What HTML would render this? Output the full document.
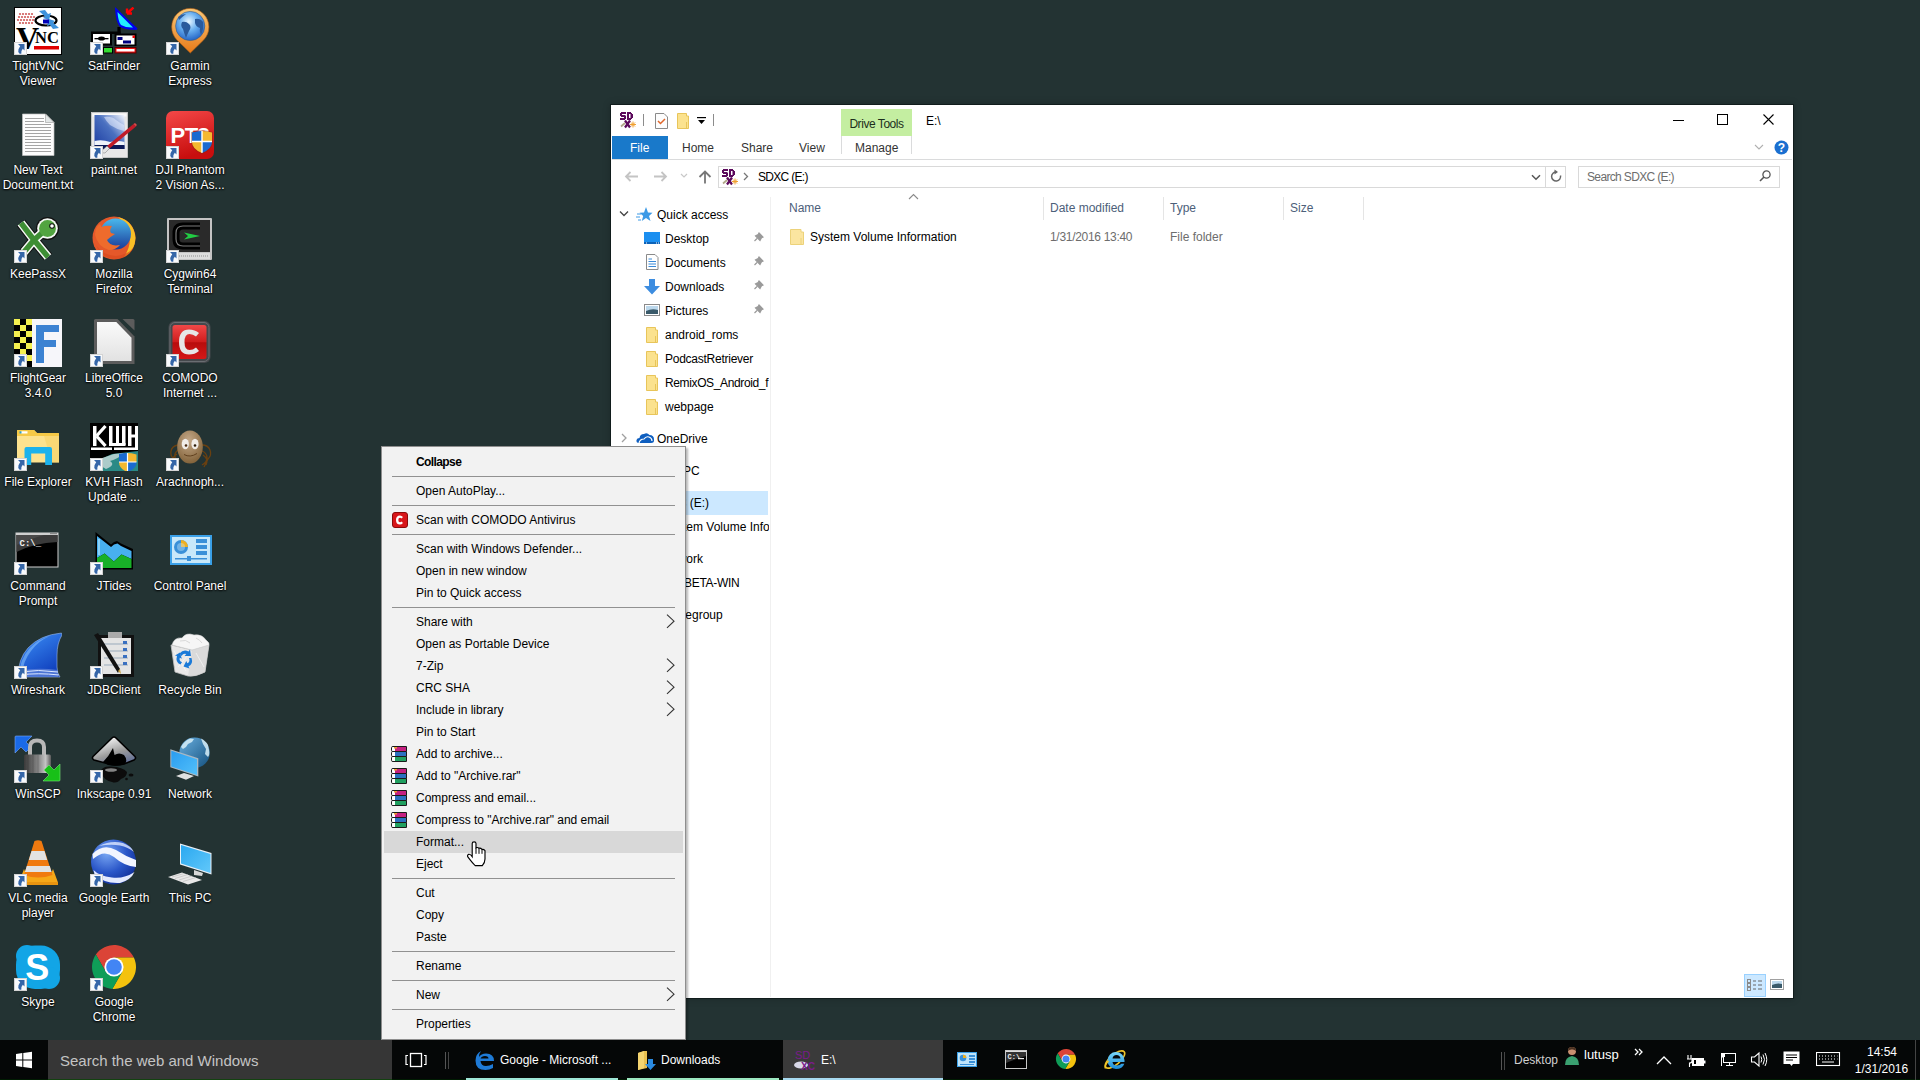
<!DOCTYPE html><html><head><meta charset="utf-8"><style>
*{margin:0;padding:0;box-sizing:border-box}
html,body{width:1920px;height:1080px;overflow:hidden;background:#233333;font-family:"Liberation Sans", sans-serif;font-size:12px;position:relative}
.a{position:absolute}
.t{position:absolute;white-space:nowrap;line-height:15px}
.lbl{position:absolute;width:76px;text-align:center;color:#fff;font-size:12px;line-height:15px;text-shadow:0 0 2px #000,0 1px 2px #000}
.mi{position:absolute;left:35px;color:#000;white-space:nowrap;line-height:15px}
.sep{position:absolute;left:11px;width:283px;height:1px;background:#bdbdbd}
.nav{position:absolute;white-space:nowrap;color:#000;line-height:15px}
</style></head><body>
<svg class="a" style="left:14px;top:7px" width="48" height="48" viewBox="0 0 48 48"><rect x="0.5" y="0.5" width="47" height="47" fill="#fff" stroke="#000"/>
<g fill="#c84040" opacity=".85"><circle cx="6" cy="7" r="1.1"/><circle cx="9" cy="7" r="1.1"/><circle cx="12" cy="7" r="1.1"/><circle cx="15" cy="7" r="1.1"/><circle cx="18" cy="7" r="1.1"/><circle cx="5" cy="10" r="1.1"/><circle cx="8" cy="10" r="1.1"/><circle cx="11" cy="10" r="1.1"/><circle cx="14" cy="10" r="1.1"/><circle cx="17" cy="10" r="1.1"/><circle cx="20" cy="10" r="1.1"/><circle cx="4" cy="13" r="1.1"/><circle cx="7" cy="13" r="1.1"/><circle cx="10" cy="13" r="1.1"/><circle cx="13" cy="13" r="1.1"/><circle cx="16" cy="13" r="1.1"/><circle cx="19" cy="13" r="1.1"/><circle cx="6" cy="16" r="1.1"/><circle cx="9" cy="16" r="1.1"/><circle cx="12" cy="16" r="1.1"/><circle cx="15" cy="16" r="1.1"/><circle cx="18" cy="16" r="1.1"/></g>
<ellipse cx="32" cy="13.5" rx="10.5" ry="5" fill="none" stroke="#000" stroke-width="2.2"/>
<path d="M25 4 L31 3 L34 7 L37 6 L35 13 L29 11 L31 9.5Z" fill="#3e92dc"/><path d="M45 21 L39 22 L36 18 L33 19 L35 12 L41 14 L39 15.5Z" fill="#3e92dc"/>
<rect x="29" y="12.5" width="6" height="4" fill="#0000b8"/>
<text x="2" y="41.5" font-family="Liberation Serif" font-weight="bold" font-size="32" fill="#000">V</text>
<text x="21" y="35.5" font-family="Liberation Serif" font-weight="bold" font-size="16.5" fill="#000">NC</text>
<rect x="20" y="39" width="25" height="3.5" fill="#e00000"/></svg>
<svg class="a" style="left:14px;top:42px" width="13" height="13" viewBox="0 0 13 13"><rect x="0.5" y="0.5" width="12" height="12" fill="#f8fafc" stroke="#d4d4d4"/><path d="M4 2 H10.5 V8.5 L8.8 6.8 Q7 8.6 7.3 11.8 H5.6 Q3.6 9.5 4.5 7.2 Q5.2 5.6 6.2 4.2Z" fill="#3566a8"/></svg>
<div class="lbl" style="left:0px;top:59px">TightVNC</div>
<div class="lbl" style="left:0px;top:74px">Viewer</div>
<svg class="a" style="left:90px;top:7px" width="48" height="48" viewBox="0 0 48 48"><path d="M25 0 L47.5 21.5 L46.5 23 Q36 23 30 20 Q25.5 15 25 0Z" fill="#0000ee"/><path d="M27.5 5 L43 20.5 Q36 20.8 31 18 Q28 14 27.5 5Z" fill="#22eeff"/>
<path d="M37 6.5 L43.5 0.5 M37 6.5 V1.5 M37 6.5 H42" stroke="#ff0000" stroke-width="2.4"/>
<path d="M29 20 V27" stroke="#000" stroke-width="3.2"/><rect x="1" y="24.5" width="29.5" height="2.5" fill="#000"/>
<rect x="1" y="25" width="21" height="13.5" fill="#000"/><rect x="3" y="27" width="17" height="9.5" fill="#fff"/><rect x="4.5" y="31" width="14" height="1.3" fill="#000"/><ellipse cx="11.5" cy="31.6" rx="3.5" ry="2" fill="#000"/>
<rect x="24.5" y="26.5" width="22" height="12.5" fill="#000"/><rect x="26.5" y="28.5" width="18" height="9" fill="#fff"/><rect x="27.5" y="30" width="5" height="3" fill="#000080"/><rect x="33" y="33.5" width="8" height="3" fill="#000080"/><rect x="42.5" y="28.5" width="2.5" height="2.5" fill="#e00"/>
<rect x="13" y="40" width="10" height="6.5" fill="#000"/><rect x="14" y="41" width="8" height="4.5" fill="#33dd33"/>
<rect x="24.5" y="40" width="22" height="6.5" fill="#500"/><rect x="25.5" y="41" width="20" height="4.5" fill="#ee1111"/><rect x="26.5" y="42" width="18" height="2.5" fill="#fff"/></svg>
<svg class="a" style="left:90px;top:42px" width="13" height="13" viewBox="0 0 13 13"><rect x="0.5" y="0.5" width="12" height="12" fill="#f8fafc" stroke="#d4d4d4"/><path d="M4 2 H10.5 V8.5 L8.8 6.8 Q7 8.6 7.3 11.8 H5.6 Q3.6 9.5 4.5 7.2 Q5.2 5.6 6.2 4.2Z" fill="#3566a8"/></svg>
<div class="lbl" style="left:76px;top:59px">SatFinder</div>
<svg class="a" style="left:166px;top:7px" width="48" height="48" viewBox="0 0 48 48"><defs><linearGradient id="gmo" x1="0" y1="0" x2="0" y2="1"><stop offset="0" stop-color="#f8c878"/><stop offset="1" stop-color="#e87a18"/></linearGradient><radialGradient id="gmb" cx=".45" cy=".35" r=".7"><stop offset="0" stop-color="#e8f6ff"/><stop offset=".45" stop-color="#6ab0f0"/><stop offset="1" stop-color="#1a5ac0"/></radialGradient></defs>
<path d="M24.3 46 L11 33 A18.6 18.6 0 1 1 37.6 33Z" fill="url(#gmo)" stroke="#b86010" stroke-width=".6"/>
<circle cx="24.2" cy="19" r="14.6" fill="url(#gmb)" stroke="#3a5a80" stroke-width=".6"/>
<path d="M16 15 Q20 14 23 17 Q26 20 23 24 Q21 28 20 31 Q18 26 17 22 Q14 19 16 15Z M29 12 Q34 11 37 15 Q38 22 35 28 Q33 24 34 21 Q30 20 29 16Z M12 10 Q16 7 20 7 Q16 10 13 13Z" fill="#2a5a9c"/></svg>
<svg class="a" style="left:166px;top:42px" width="13" height="13" viewBox="0 0 13 13"><rect x="0.5" y="0.5" width="12" height="12" fill="#f8fafc" stroke="#d4d4d4"/><path d="M4 2 H10.5 V8.5 L8.8 6.8 Q7 8.6 7.3 11.8 H5.6 Q3.6 9.5 4.5 7.2 Q5.2 5.6 6.2 4.2Z" fill="#3566a8"/></svg>
<div class="lbl" style="left:152px;top:59px">Garmin</div>
<div class="lbl" style="left:152px;top:74px">Express</div>
<svg class="a" style="left:14px;top:111px" width="48" height="48" viewBox="0 0 48 48"><path d="M8.5 3 H31.5 L40 11.5 V44.5 H8.5Z" fill="#fdfdfd" stroke="#c0c0c0" stroke-width=".7"/>
<path d="M31.5 3 V11.5 H40Z" fill="#e2e6e6" stroke="#a8a8a8" stroke-width=".7"/>
<path d="M11 7.5H30M11 10.5H30M11 13.5H37M11 16.5H37M11 19.5H37M11 22.5H37M11 25.5H37M11 28.5H37M11 31.5H37M11 34.5H37M11 37.5H37M11 40.5H37" stroke="#a4a4a4" stroke-width="1"/></svg>
<div class="lbl" style="left:0px;top:163px">New Text</div>
<div class="lbl" style="left:0px;top:178px">Document.txt</div>
<svg class="a" style="left:90px;top:111px" width="48" height="48" viewBox="0 0 48 48"><defs><linearGradient id="pnsky" x1="0" y1="1" x2="1" y2="0"><stop offset="0" stop-color="#1a3aa0"/><stop offset=".55" stop-color="#4a70c0"/><stop offset="1" stop-color="#f4f8ff"/></linearGradient></defs>
<rect x="1.5" y="1.5" width="36" height="45" fill="#e8e8e8" stroke="#d0d0d0" stroke-width=".8"/><rect x="2.5" y="2.5" width="34" height="3" fill="#fafafa"/>
<rect x="4.5" y="4" width="30" height="34" fill="url(#pnsky)"/>
<path d="M14 6 Q22 5 26 9 Q30 12 34 14 V20 Q26 18 20 14 Q16 10 14 6Z" fill="#e8eeff" opacity=".55"/>
<path d="M4.5 30 Q12 28 20 31 Q28 29 34.5 31 V35 H4.5Z" fill="#f0f4fa"/><rect x="4.5" y="34" width="30" height="4" fill="#0c1a58"/>
<path d="M17 35 L43.5 13 L46 15.5 L19.5 37.5Z" fill="#c01c28"/><path d="M43.5 13 L46 15.5 L46.8 13.8 L45 12Z" fill="#e04848"/>
<path d="M12 39.5 L17 35 L19.5 37.5 L15 42 Q12 42.5 12 40.5Z" fill="#e4e4e4" stroke="#777" stroke-width=".5"/></svg>
<svg class="a" style="left:90px;top:146px" width="13" height="13" viewBox="0 0 13 13"><rect x="0.5" y="0.5" width="12" height="12" fill="#f8fafc" stroke="#d4d4d4"/><path d="M4 2 H10.5 V8.5 L8.8 6.8 Q7 8.6 7.3 11.8 H5.6 Q3.6 9.5 4.5 7.2 Q5.2 5.6 6.2 4.2Z" fill="#3566a8"/></svg>
<div class="lbl" style="left:76px;top:163px">paint.net</div>
<svg class="a" style="left:166px;top:111px" width="48" height="48" viewBox="0 0 48 48"><defs><linearGradient id="ptg" x1="0" y1="0" x2="0.3" y2="1"><stop offset="0" stop-color="#f44848"/><stop offset="1" stop-color="#c80e0e"/></linearGradient><clipPath id="pts"><path d="M26 21.5 Q36 18.5 46 21.5 V31 Q46 38 36 42 Q26 38 26 31Z"/></clipPath></defs>
<rect x="0" y="0" width="48" height="48" rx="7" fill="url(#ptg)"/>
<text x="4.5" y="32" font-family="Liberation Sans" font-weight="bold" font-size="22" fill="#fff" letter-spacing="-0.5">PT3</text>
<path d="M25.2 21 Q36 17.5 46.8 21 V31 Q46.8 39 36 43 Q25.2 39 25.2 31Z" fill="#8a2a10" opacity=".5"/>
<g clip-path="url(#pts)"><rect x="26" y="18" width="10" height="12.5" fill="#1a6ad0"/><rect x="36" y="18" width="10" height="12.5" fill="#f4b830"/><rect x="26" y="30.5" width="10" height="12.5" fill="#f4b830"/><rect x="36" y="30.5" width="10" height="12.5" fill="#1a6ad0"/><path d="M36 18 V43 M26 30.5 H46" stroke="#fff" stroke-width="1.4"/></g></svg>
<svg class="a" style="left:166px;top:146px" width="13" height="13" viewBox="0 0 13 13"><rect x="0.5" y="0.5" width="12" height="12" fill="#f8fafc" stroke="#d4d4d4"/><path d="M4 2 H10.5 V8.5 L8.8 6.8 Q7 8.6 7.3 11.8 H5.6 Q3.6 9.5 4.5 7.2 Q5.2 5.6 6.2 4.2Z" fill="#3566a8"/></svg>
<div class="lbl" style="left:152px;top:163px">DJI Phantom</div>
<div class="lbl" style="left:152px;top:178px">2 Vision As...</div>
<svg class="a" style="left:14px;top:215px" width="48" height="48" viewBox="0 0 48 48"><path d="M7 8 L20 25 L10 37 M20 25 L34 42 M20 25 L29 17" stroke="#111" stroke-width="10.5" fill="none"/>
<circle cx="33.5" cy="13.5" r="11.5" fill="#111"/>
<path d="M7 8 L20 25 L10 37 M20 25 L34 42 M20 25 L29 17" stroke="#f4f8f4" stroke-width="8.5" fill="none"/>
<circle cx="33.5" cy="13.5" r="10.3" fill="#f4f8f4"/>
<path d="M7 8 L20 25 L10 37 M20 25 L34 42 M20 25 L29 17" stroke="#3e8e34" stroke-width="5.5" fill="none"/>
<circle cx="33.5" cy="13.5" r="8.4" fill="#52a440"/>
<circle cx="38" cy="11" r="2.8" fill="#111"/><circle cx="38" cy="11" r="1.8" fill="#fff"/></svg>
<svg class="a" style="left:14px;top:250px" width="13" height="13" viewBox="0 0 13 13"><rect x="0.5" y="0.5" width="12" height="12" fill="#f8fafc" stroke="#d4d4d4"/><path d="M4 2 H10.5 V8.5 L8.8 6.8 Q7 8.6 7.3 11.8 H5.6 Q3.6 9.5 4.5 7.2 Q5.2 5.6 6.2 4.2Z" fill="#3566a8"/></svg>
<div class="lbl" style="left:0px;top:267px">KeePassX</div>
<svg class="a" style="left:90px;top:215px" width="48" height="48" viewBox="0 0 48 48"><defs><linearGradient id="ffg" x1="0" y1="0" x2="0" y2="1"><stop offset="0" stop-color="#4ab8ec"/><stop offset="1" stop-color="#1a3a98"/></linearGradient></defs>
<circle cx="24" cy="23" r="21.5" fill="#e4582a"/><path d="M28 2 Q44 6 45.5 23 Q45 36 34 42 Q42 30 39 18 Q35 8 28 2Z" fill="#f8c026"/>
<circle cx="25.5" cy="19" r="15.5" fill="url(#ffg)"/>
<path d="M5 20 Q5 12 10 9 L11.5 12 Q16 10 22 11 Q19 15 21 18 L25 19 Q20 22 17 25 Q20 32 30 30 Q26 35 19 35 Q8 32 5 20Z" fill="#ee6b2c"/>
<path d="M6 30 Q12 44 26 44 Q38 44 44 32 Q38 40 26 41 Q12 40 6 30Z" fill="#d84a20" opacity=".7"/></svg>
<svg class="a" style="left:90px;top:250px" width="13" height="13" viewBox="0 0 13 13"><rect x="0.5" y="0.5" width="12" height="12" fill="#f8fafc" stroke="#d4d4d4"/><path d="M4 2 H10.5 V8.5 L8.8 6.8 Q7 8.6 7.3 11.8 H5.6 Q3.6 9.5 4.5 7.2 Q5.2 5.6 6.2 4.2Z" fill="#3566a8"/></svg>
<div class="lbl" style="left:76px;top:267px">Mozilla</div>
<div class="lbl" style="left:76px;top:282px">Firefox</div>
<svg class="a" style="left:166px;top:215px" width="48" height="48" viewBox="0 0 48 48"><rect x="1" y="3" width="45" height="42" rx="1" fill="#c4c4c4"/><rect x="3" y="5" width="41" height="32" fill="#2a2a2a"/>
<path d="M34 11 H17 Q10 11 10 18 V24 Q10 31 17 31 H34" fill="none" stroke="#000" stroke-width="7"/><path d="M34 11 H17 Q10 11 10 18 V24 Q10 31 17 31 H34" fill="none" stroke="#7a7a7a" stroke-width="1.2"/>
<path d="M18 17.5 L34 21 L18 24.5 L22 21Z" fill="#22cc44"/><rect x="3" y="38" width="41" height="6" fill="#dcdcdc"/><path d="M5 41 H42" stroke="#a8a8a8" stroke-width="1.5" stroke-dasharray="1 1"/></svg>
<svg class="a" style="left:166px;top:250px" width="13" height="13" viewBox="0 0 13 13"><rect x="0.5" y="0.5" width="12" height="12" fill="#f8fafc" stroke="#d4d4d4"/><path d="M4 2 H10.5 V8.5 L8.8 6.8 Q7 8.6 7.3 11.8 H5.6 Q3.6 9.5 4.5 7.2 Q5.2 5.6 6.2 4.2Z" fill="#3566a8"/></svg>
<div class="lbl" style="left:152px;top:267px">Cygwin64</div>
<div class="lbl" style="left:152px;top:282px">Terminal</div>
<svg class="a" style="left:14px;top:319px" width="48" height="48" viewBox="0 0 48 48"><rect x="17" y="0" width="31" height="48" fill="#f6f6fa"/><rect x="0" y="0" width="18" height="48" fill="#000"/>
<g fill="#f4f050"><rect x="0" y="0" width="6" height="6"/><rect x="12" y="0" width="6" height="6"/><rect x="6" y="6" width="6" height="6"/><rect x="0" y="12" width="6" height="6"/><rect x="12" y="12" width="6" height="6"/><rect x="6" y="18" width="6" height="6"/><rect x="0" y="24" width="6" height="6"/><rect x="12" y="24" width="6" height="6"/><rect x="6" y="30" width="6" height="6"/><rect x="0" y="36" width="6" height="6"/><rect x="12" y="36" width="6" height="6"/><rect x="6" y="42" width="6" height="6"/></g>
<path d="M22 6 H45 V13 H30 V21 H42 V28 H30 V44 H22Z" fill="#3c82d2"/></svg>
<svg class="a" style="left:14px;top:354px" width="13" height="13" viewBox="0 0 13 13"><rect x="0.5" y="0.5" width="12" height="12" fill="#f8fafc" stroke="#d4d4d4"/><path d="M4 2 H10.5 V8.5 L8.8 6.8 Q7 8.6 7.3 11.8 H5.6 Q3.6 9.5 4.5 7.2 Q5.2 5.6 6.2 4.2Z" fill="#3566a8"/></svg>
<div class="lbl" style="left:0px;top:371px">FlightGear</div>
<div class="lbl" style="left:0px;top:386px">3.4.0</div>
<svg class="a" style="left:90px;top:319px" width="48" height="48" viewBox="0 0 48 48"><defs><linearGradient id="lbg" x1="0" y1="0" x2="0" y2="1"><stop offset="0" stop-color="#fafafa"/><stop offset="1" stop-color="#e2e2e2"/></linearGradient></defs>
<path d="M4 1.5 Q4 0 5.5 0 H27.5 L44.5 17.5 V45 H4Z" fill="#5c5c5c"/>
<path d="M7 3 H26.3 L41.5 18.7 V42 H7Z" fill="url(#lbg)"/>
<path d="M32.5 0 H43 Q44.5 0 44.5 1.5 V11.5Z" fill="#5c5c5c"/></svg>
<svg class="a" style="left:90px;top:354px" width="13" height="13" viewBox="0 0 13 13"><rect x="0.5" y="0.5" width="12" height="12" fill="#f8fafc" stroke="#d4d4d4"/><path d="M4 2 H10.5 V8.5 L8.8 6.8 Q7 8.6 7.3 11.8 H5.6 Q3.6 9.5 4.5 7.2 Q5.2 5.6 6.2 4.2Z" fill="#3566a8"/></svg>
<div class="lbl" style="left:76px;top:371px">LibreOffice</div>
<div class="lbl" style="left:76px;top:386px">5.0</div>
<svg class="a" style="left:166px;top:319px" width="48" height="48" viewBox="0 0 48 48"><defs><linearGradient id="cmg" x1="0" y1="0" x2="0" y2="1"><stop offset="0" stop-color="#f04848"/><stop offset=".5" stop-color="#d01c1c"/><stop offset=".52" stop-color="#b80c0c"/><stop offset="1" stop-color="#d41818"/></linearGradient></defs>
<rect x="2.5" y="2" width="42" height="42" rx="6" fill="#44484c"/><rect x="4" y="3.5" width="39" height="39" rx="5" fill="none" stroke="#6a6e72" stroke-width="1"/>
<rect x="6.5" y="6" width="34" height="34" rx="2.5" fill="url(#cmg)"/>
<path d="M33 14 Q29 10.5 23 10.5 Q13 10.5 13 23 Q13 35.5 23 35.5 Q29 35.5 33 32 L30 28.5 Q27 31 23.5 31 Q18.5 31 18.5 23 Q18.5 15 23.5 15 Q27 15 30 17.5Z" fill="#e6e6e6"/></svg>
<svg class="a" style="left:166px;top:354px" width="13" height="13" viewBox="0 0 13 13"><rect x="0.5" y="0.5" width="12" height="12" fill="#f8fafc" stroke="#d4d4d4"/><path d="M4 2 H10.5 V8.5 L8.8 6.8 Q7 8.6 7.3 11.8 H5.6 Q3.6 9.5 4.5 7.2 Q5.2 5.6 6.2 4.2Z" fill="#3566a8"/></svg>
<div class="lbl" style="left:152px;top:371px">COMODO</div>
<div class="lbl" style="left:152px;top:386px">Internet ...</div>
<svg class="a" style="left:14px;top:423px" width="48" height="48" viewBox="0 0 48 48"><path d="M3 8 Q3 7 4 7 H20 L23 10 H44 Q45 10 45 11 V39.5 H3Z" fill="#fde28e"/>
<path d="M3 8 Q3 7 4 7 H20 L23 10 H44 Q45 10 45 11 V13 H3Z" fill="#f6c946"/><path d="M30 13 H45 V39.5 H38Z" fill="#f8d264" opacity=".6"/>
<rect x="6.5" y="8.3" width="7" height="2.2" fill="#fff"/><rect x="5.5" y="8.3" width="2" height="2.2" fill="#2aa0c8"/>
<path d="M10.5 42 V26 Q10.5 24 12.5 24 H36 Q38 24 38 26 V42 H31.2 V30.5 H17.2 V42Z" fill="#1cb2ec"/></svg>
<svg class="a" style="left:14px;top:458px" width="13" height="13" viewBox="0 0 13 13"><rect x="0.5" y="0.5" width="12" height="12" fill="#f8fafc" stroke="#d4d4d4"/><path d="M4 2 H10.5 V8.5 L8.8 6.8 Q7 8.6 7.3 11.8 H5.6 Q3.6 9.5 4.5 7.2 Q5.2 5.6 6.2 4.2Z" fill="#3566a8"/></svg>
<div class="lbl" style="left:0px;top:475px">File Explorer</div>
<svg class="a" style="left:90px;top:423px" width="48" height="48" viewBox="0 0 48 48"><defs><clipPath id="kvs"><path d="M29 31 Q37.5 29 46.5 31.5 V39 Q46.5 46 37.5 49 Q29 46 29 39Z"/></clipPath></defs>
<rect width="48" height="48" fill="#000"/>
<g fill="#fff"><rect x="3" y="3" width="3.5" height="20"/><rect x="19" y="3" width="3.5" height="19"/><rect x="26" y="3" width="3" height="17"/><rect x="32" y="3" width="3.5" height="19"/><rect x="19" y="20" width="16.5" height="3"/><rect x="38" y="3" width="3.5" height="20"/><rect x="45" y="3" width="3" height="22"/><rect x="38" y="11.5" width="10" height="3"/><rect x="1" y="24.5" width="21" height="2.5"/><rect x="24" y="24.5" width="24" height="2.5"/></g>
<path d="M6.5 13 L15.5 3 M6.5 13 L15.5 23" stroke="#fff" stroke-width="3.3"/>
<path d="M0 40 Q12 36 22 31 L48 28 V48 H0Z" fill="#2a8a86"/><path d="M3 39 Q14 34 24 31 L34 30 Q28 36 20 38 Q26 42 16 46 Q10 42 3 39Z" fill="#d8e0e0" opacity=".75"/>
<g clip-path="url(#kvs)"><rect x="28" y="28" width="10" height="11" fill="#1a6ad0"/><rect x="38" y="28" width="10" height="11" fill="#f4b830"/><rect x="28" y="39" width="10" height="11" fill="#f4b830"/><rect x="38" y="39" width="10" height="11" fill="#1a6ad0"/><path d="M37.5 28 V50 M28 39 H48" stroke="#fff" stroke-width="1.2"/></g></svg>
<svg class="a" style="left:90px;top:458px" width="13" height="13" viewBox="0 0 13 13"><rect x="0.5" y="0.5" width="12" height="12" fill="#f8fafc" stroke="#d4d4d4"/><path d="M4 2 H10.5 V8.5 L8.8 6.8 Q7 8.6 7.3 11.8 H5.6 Q3.6 9.5 4.5 7.2 Q5.2 5.6 6.2 4.2Z" fill="#3566a8"/></svg>
<div class="lbl" style="left:76px;top:475px">KVH Flash</div>
<div class="lbl" style="left:76px;top:490px">Update ...</div>
<svg class="a" style="left:166px;top:423px" width="48" height="48" viewBox="0 0 48 48"><defs><radialGradient id="arg" cx=".45" cy=".3" r=".8"><stop offset="0" stop-color="#c4a888"/><stop offset="1" stop-color="#7a5a30"/></radialGradient></defs>
<g stroke="#6a4010" stroke-width="1.3" fill="none"><path d="M12 22 Q6 23 5 28 Q4 33 8 36 M12 27 Q8 30 9 34 Q10 38 13 38 M11 31 Q6 34 7 38"/><path d="M36 22 Q42 22 44 27 Q46 32 42 36 Q40 40 38 44 M36 28 Q41 30 41 35 Q41 39 36 42 M37 32 Q43 36 40 42"/></g>
<ellipse cx="24" cy="24" rx="12.8" ry="16.5" fill="url(#arg)"/>
<ellipse cx="19.3" cy="21" rx="3.6" ry="5.2" fill="#f0ece8"/><ellipse cx="29" cy="21" rx="3.6" ry="5.2" fill="#f0ece8"/>
<circle cx="20" cy="22.5" r="1.3" fill="#4a2a10"/><circle cx="29" cy="22.5" r="1.3" fill="#2a1a08"/>
<path d="M18 31.5 Q24 35 31 30.5" stroke="#5a3a18" stroke-width=".9" fill="none"/></svg>
<svg class="a" style="left:166px;top:458px" width="13" height="13" viewBox="0 0 13 13"><rect x="0.5" y="0.5" width="12" height="12" fill="#f8fafc" stroke="#d4d4d4"/><path d="M4 2 H10.5 V8.5 L8.8 6.8 Q7 8.6 7.3 11.8 H5.6 Q3.6 9.5 4.5 7.2 Q5.2 5.6 6.2 4.2Z" fill="#3566a8"/></svg>
<div class="lbl" style="left:152px;top:475px">Arachnoph...</div>
<svg class="a" style="left:14px;top:527px" width="48" height="48" viewBox="0 0 48 48"><rect x="1.5" y="5.5" width="43" height="35" fill="#d0d0d0"/><rect x="2.5" y="8" width="41" height="31.5" fill="#000"/><rect x="36" y="6" width="7" height="1.2" fill="#888"/>
<path d="M2.5 8 H43.5 V15 Q20 16 2.5 25Z" fill="#3a3a3a"/><path d="M2.5 8 H30 Q15 12 2.5 18Z" fill="#555" opacity=".6"/>
<text x="5.5" y="19" font-family="Liberation Mono" font-weight="bold" font-size="9" fill="#f0f0f0">C:\_</text></svg>
<svg class="a" style="left:14px;top:562px" width="13" height="13" viewBox="0 0 13 13"><rect x="0.5" y="0.5" width="12" height="12" fill="#f8fafc" stroke="#d4d4d4"/><path d="M4 2 H10.5 V8.5 L8.8 6.8 Q7 8.6 7.3 11.8 H5.6 Q3.6 9.5 4.5 7.2 Q5.2 5.6 6.2 4.2Z" fill="#3566a8"/></svg>
<div class="lbl" style="left:0px;top:579px">Command</div>
<div class="lbl" style="left:0px;top:594px">Prompt</div>
<svg class="a" style="left:90px;top:527px" width="48" height="48" viewBox="0 0 48 48"><path d="M5.5 5 L21 17.5 L24 15 L27 14 L31 16.5 L43 22 V42.5 H5.5Z" fill="#000"/>
<path d="M7 9 L21 20 L24 17.5 L27.5 16.5 L31 19 L41.5 24 V32 L31.5 27.5 L23.8 34.5 L14.6 26.5 L7 31Z" fill="#48b0f0"/><path d="M9 12 V28" stroke="#b8e8ff" stroke-width="1.2"/>
<path d="M7 31 L14.6 26.5 L23.8 34.5 L31.5 27.5 L41.5 32 V41 H7Z" fill="#18b028"/></svg>
<svg class="a" style="left:90px;top:562px" width="13" height="13" viewBox="0 0 13 13"><rect x="0.5" y="0.5" width="12" height="12" fill="#f8fafc" stroke="#d4d4d4"/><path d="M4 2 H10.5 V8.5 L8.8 6.8 Q7 8.6 7.3 11.8 H5.6 Q3.6 9.5 4.5 7.2 Q5.2 5.6 6.2 4.2Z" fill="#3566a8"/></svg>
<div class="lbl" style="left:76px;top:579px">JTides</div>
<svg class="a" style="left:166px;top:527px" width="48" height="48" viewBox="0 0 48 48"><rect x="4" y="8" width="42" height="30" fill="#3aa0e8"/><rect x="6" y="10" width="38" height="26" fill="#c8e8fa"/>
<circle cx="15" cy="20" r="7" fill="#3a90d8"/><path d="M15 13 A7 7 0 0 1 22 20 H15Z" fill="#f0b020"/><circle cx="15" cy="20" r="4" fill="#c8e8fa" opacity=".4"/>
<g fill="#3a90d8"><rect x="30" y="12" width="11" height="4"/><rect x="30" y="18" width="11" height="4"/><rect x="30" y="24" width="11" height="4"/></g><rect x="9" y="31" width="32" height="1.5" fill="#3a90d8"/><rect x="21" y="29" width="4" height="5" fill="#3a90d8"/></svg>
<div class="lbl" style="left:152px;top:579px">Control Panel</div>
<svg class="a" style="left:14px;top:631px" width="48" height="48" viewBox="0 0 48 48"><defs><linearGradient id="wsg" x1="0.2" y1="0" x2="0.8" y2="1"><stop offset="0" stop-color="#3a8cf4"/><stop offset="1" stop-color="#0c38b8"/></linearGradient></defs>
<path d="M4 46 Q4 28 14 17 Q26 4 47.5 2 L48 4 Q43 12 43 24 V36 Q43 42 46 46Z" fill="url(#wsg)" stroke="#9ab8e8" stroke-width=".6"/>
<path d="M5 44 Q6 28 15 18 Q24 8 36 5 Q24 10 17 20 Q9 30 8 44Z" fill="#8ac4ff" opacity=".55"/>
<path d="M5 40 Q22 36 44 39 V46 H5Z" fill="#5a80d8" opacity=".8"/><path d="M6 41 Q24 38 44 41 M6 44 Q24 41.5 45 44" stroke="#dce8ff" stroke-width="1" fill="none"/></svg>
<svg class="a" style="left:14px;top:666px" width="13" height="13" viewBox="0 0 13 13"><rect x="0.5" y="0.5" width="12" height="12" fill="#f8fafc" stroke="#d4d4d4"/><path d="M4 2 H10.5 V8.5 L8.8 6.8 Q7 8.6 7.3 11.8 H5.6 Q3.6 9.5 4.5 7.2 Q5.2 5.6 6.2 4.2Z" fill="#3566a8"/></svg>
<div class="lbl" style="left:0px;top:683px">Wireshark</div>
<svg class="a" style="left:90px;top:631px" width="48" height="48" viewBox="0 0 48 48"><rect x="8" y="4" width="36" height="42" fill="#111"/><rect x="11" y="7" width="30" height="36" fill="#e4e4e4"/><rect x="18" y="1" width="14" height="6" fill="#aaa"/>
<g stroke="#9ab" stroke-width="1"><path d="M14 13H38M14 20H38M14 27H38M14 34H38"/></g><g fill="#3a70c0"><rect x="33" y="10" width="4" height="3"/><rect x="33" y="17" width="4" height="3"/><rect x="33" y="24" width="4" height="3"/><rect x="33" y="31" width="4" height="3"/></g>
<path d="M4 4 L8 2 L30 38 L28 42 Z" fill="#111"/><path d="M28 40 L30 38 L31 43Z" fill="#c8a040"/></svg>
<svg class="a" style="left:90px;top:666px" width="13" height="13" viewBox="0 0 13 13"><rect x="0.5" y="0.5" width="12" height="12" fill="#f8fafc" stroke="#d4d4d4"/><path d="M4 2 H10.5 V8.5 L8.8 6.8 Q7 8.6 7.3 11.8 H5.6 Q3.6 9.5 4.5 7.2 Q5.2 5.6 6.2 4.2Z" fill="#3566a8"/></svg>
<div class="lbl" style="left:76px;top:683px">JDBClient</div>
<svg class="a" style="left:166px;top:631px" width="48" height="48" viewBox="0 0 48 48"><path d="M5 14 L26 19 L43 14 L39 41 Q30 46 22 45 L9 41Z" fill="#e8e8e8" stroke="#c4c4c4" stroke-width=".8"/>
<path d="M26 19 L43 14 L39 41 Q30 46 22 45Z" fill="#d4d4d4" opacity=".7"/>
<path d="M8 20 L20 40 M30 22 L38 36 M12 36 L22 24" stroke="#fff" stroke-width=".8" opacity=".7"/>
<path d="M6 14 Q8 6 16 7 Q20 1 28 4 Q36 3 40 9 Q44 12 43 14 L26 19Z" fill="#f6f6f6" stroke="#d4d4d4" stroke-width=".6"/><path d="M14 10 Q20 8 24 12 M30 7 Q34 9 36 12" stroke="#d0d0d0" stroke-width=".8" fill="none"/>
<g fill="#1a7ad8"><path d="M13.5 22.5 Q17.5 18 22.5 20.5 L24 18.5 L25 25 L18.5 25 L20.3 23 Q17.3 22 15.5 25Z"/><path d="M25.5 27 Q27.5 33 22.5 35.5 L23.5 37.5 L17.5 35.5 L20.3 30 L21.3 32.2 Q24.5 31 23 27Z"/><path d="M14.5 33.5 Q9 31.5 11 25 L9 24.5 L14 21.5 L15.8 27.8 L13.8 26.8 Q12.8 30.2 16 31.2Z"/></g></svg>
<div class="lbl" style="left:152px;top:683px">Recycle Bin</div>
<svg class="a" style="left:14px;top:735px" width="48" height="48" viewBox="0 0 48 48"><defs><linearGradient id="wlg" x1="0" y1="0" x2="1" y2="0"><stop offset="0" stop-color="#3a3a3a"/><stop offset=".55" stop-color="#8a8a8a"/><stop offset=".8" stop-color="#c4c4c4"/><stop offset="1" stop-color="#5a5a5a"/></linearGradient></defs>
<path d="M1 2 Q1 1 2 1 H18 L12 7 L17 12 L12 17 L7 12 L1 18Z" fill="#1a6ae8" stroke="#7aa8f0" stroke-width=".6"/>
<path d="M16 20 V12 Q16 5.5 23 5.5 Q30 5.5 30 12 V20" fill="none" stroke="#b8b8b8" stroke-width="4"/>
<rect x="10" y="19.5" width="27" height="18.5" rx="1.5" fill="url(#wlg)"/><path d="M14 20 V38 M19 20 V38 M24 20 V38" stroke="#000" stroke-width=".6" opacity=".25"/>
<path d="M46 45 Q46 46 45 46 H29 L35 40 L30 35 L35 30 L40 35 L46 29Z" fill="#18c018" stroke="#7ae87a" stroke-width=".6"/></svg>
<svg class="a" style="left:14px;top:770px" width="13" height="13" viewBox="0 0 13 13"><rect x="0.5" y="0.5" width="12" height="12" fill="#f8fafc" stroke="#d4d4d4"/><path d="M4 2 H10.5 V8.5 L8.8 6.8 Q7 8.6 7.3 11.8 H5.6 Q3.6 9.5 4.5 7.2 Q5.2 5.6 6.2 4.2Z" fill="#3566a8"/></svg>
<div class="lbl" style="left:0px;top:787px">WinSCP</div>
<svg class="a" style="left:90px;top:735px" width="48" height="48" viewBox="0 0 48 48"><defs><linearGradient id="inkg" x1="0.3" y1="0" x2="0.8" y2="1"><stop offset="0" stop-color="#ffffff"/><stop offset=".55" stop-color="#9a9a9a"/><stop offset="1" stop-color="#5a6a98"/></linearGradient></defs>
<path d="M22 3 Q24 1 26 3 L45 21.5 Q46.5 23.5 44 25 L34 29 Q27 31 19 29 L4 25 Q1.5 23.5 3 21.5Z" fill="url(#inkg)" stroke="#000" stroke-width="1.6"/>
<path d="M13 27 Q19 21 23 13 L24.5 20 Q29 17 34 20 Q38 25 35 29 Q27 32 18 30Z" fill="#000"/>
<path d="M11 37 Q11 31 21 31.5 Q33 32 37 37 Q37 42 31 44 Q27 49 22 47 Q13 45 11 37Z" fill="#0c0c0c"/>
<ellipse cx="21" cy="35" rx="6" ry="1.8" fill="#9a9a9a" opacity=".85"/>
<ellipse cx="41" cy="40" rx="2.5" ry="1.5" fill="#0c0c0c"/><circle cx="36.5" cy="44" r="1.3" fill="#0c0c0c"/></svg>
<svg class="a" style="left:90px;top:770px" width="13" height="13" viewBox="0 0 13 13"><rect x="0.5" y="0.5" width="12" height="12" fill="#f8fafc" stroke="#d4d4d4"/><path d="M4 2 H10.5 V8.5 L8.8 6.8 Q7 8.6 7.3 11.8 H5.6 Q3.6 9.5 4.5 7.2 Q5.2 5.6 6.2 4.2Z" fill="#3566a8"/></svg>
<div class="lbl" style="left:76px;top:787px">Inkscape 0.91</div>
<svg class="a" style="left:166px;top:735px" width="48" height="48" viewBox="0 0 48 48"><defs><linearGradient id="nwg" x1="0" y1="0" x2="1" y2="1"><stop offset="0" stop-color="#6ab0e0"/><stop offset="1" stop-color="#14507e"/></linearGradient><linearGradient id="nws" x1="0" y1="0" x2="1" y2="1"><stop offset="0" stop-color="#2a9cf0"/><stop offset="1" stop-color="#52c0fa"/></linearGradient></defs>
<circle cx="28.6" cy="17.8" r="15.2" fill="url(#nwg)"/>
<path d="M15 12 Q18 6 24 3.5 L28 4 L26 7 L22 9 L20 12 L17 14Z M35 3.5 Q40 6 42 10 L43 15 Q44 20 42 22 L39 19 L40 14 L37 9Z" fill="#d8eef8" opacity=".85"/>
<path d="M10 41 L18 38 L28 41 L20 44.7Z" fill="#e0e0e0"/>
<path d="M4.3 14.2 L32.3 23.2 V41.6 L4.3 32.3Z" fill="#aab8c4"/><path d="M5.3 15.8 L31 24.2 V40 L5.3 31.5Z" fill="url(#nws)"/></svg>
<div class="lbl" style="left:152px;top:787px">Network</div>
<svg class="a" style="left:14px;top:839px" width="48" height="48" viewBox="0 0 48 48"><path d="M10 30 L5 43.5 Q5 46 8 46 H41 Q44 46 44 43.5 L39 30 Q38 37 24.5 38 Q11 37 10 30Z" fill="#f6a818"/><path d="M5 43 H44 L44 46 H5Z" fill="#e89410"/>
<path d="M20.5 2 Q24 0.5 27.5 2 L38.5 36 Q24 41 10 36Z" fill="#f07a10"/><path d="M17.5 12 H30.5 L33.2 21 H14.8Z M12.8 27 H35.8 L37.6 33 H10.9Z" fill="#e2e2e2"/></svg>
<svg class="a" style="left:14px;top:874px" width="13" height="13" viewBox="0 0 13 13"><rect x="0.5" y="0.5" width="12" height="12" fill="#f8fafc" stroke="#d4d4d4"/><path d="M4 2 H10.5 V8.5 L8.8 6.8 Q7 8.6 7.3 11.8 H5.6 Q3.6 9.5 4.5 7.2 Q5.2 5.6 6.2 4.2Z" fill="#3566a8"/></svg>
<div class="lbl" style="left:0px;top:891px">VLC media</div>
<div class="lbl" style="left:0px;top:906px">player</div>
<svg class="a" style="left:90px;top:839px" width="48" height="48" viewBox="0 0 48 48"><defs><radialGradient id="gee" cx=".35" cy=".3" r=".8"><stop offset="0" stop-color="#7aa8f4"/><stop offset=".55" stop-color="#2a56c8"/><stop offset="1" stop-color="#0e2a92"/></radialGradient></defs>
<circle cx="23.5" cy="23" r="22.5" fill="url(#gee)"/>
<path d="M2.5 15 Q13 4 26 11 Q35 17 46 21 L46 28 Q34 27 24 18 Q14 10 3 20Z" fill="#f2f5ff"/>
<path d="M9 7 Q21 1 33 4 Q41 7 44 13 Q38 8 30 6.5 Q20 5 9 7Z" fill="#dfe8ff" opacity=".8"/>
<path d="M3.5 31 Q9 37 22 38.5 Q34 40 44.5 33 Q41 41 30 44 Q14 45 4.5 35Z" fill="#e4eaff"/></svg>
<svg class="a" style="left:90px;top:874px" width="13" height="13" viewBox="0 0 13 13"><rect x="0.5" y="0.5" width="12" height="12" fill="#f8fafc" stroke="#d4d4d4"/><path d="M4 2 H10.5 V8.5 L8.8 6.8 Q7 8.6 7.3 11.8 H5.6 Q3.6 9.5 4.5 7.2 Q5.2 5.6 6.2 4.2Z" fill="#3566a8"/></svg>
<div class="lbl" style="left:76px;top:891px">Google Earth</div>
<svg class="a" style="left:166px;top:839px" width="48" height="48" viewBox="0 0 48 48"><defs><linearGradient id="tpg" x1="0" y1="0" x2="1" y2="1"><stop offset="0" stop-color="#2aa8f0"/><stop offset="1" stop-color="#62c8fa"/></linearGradient></defs>
<path d="M14 4.5 L45.5 14 V35.5 L14 25.5Z" fill="#e8f0f8"/><path d="M15 6 L44.5 15 V34 L15 24.5Z" fill="url(#tpg)"/>
<path d="M28 31 L37 34 L36 37 L28 36Z" fill="#d8d8d8"/>
<path d="M2 38 L16 33.5 L36 41 L22 45.5Z" fill="#e8e8e8"/><path d="M6 38 L18 34.5 M9 39.5 L22 35.5 M13 41 L26 37 M17 42.5 L30 38.5" stroke="#b8b8b8" stroke-width=".6"/></svg>
<div class="lbl" style="left:152px;top:891px">This PC</div>
<svg class="a" style="left:14px;top:943px" width="48" height="48" viewBox="0 0 48 48"><rect x="2" y="2.5" width="44" height="43.5" rx="19" fill="#12a5e6"/><circle cx="13" cy="13" r="11" fill="#12a5e6"/><circle cx="35" cy="35" r="11" fill="#12a5e6"/>
<text x="11.3" y="37" font-family="Liberation Sans" font-weight="bold" font-size="36" fill="#fff">S</text></svg>
<svg class="a" style="left:14px;top:978px" width="13" height="13" viewBox="0 0 13 13"><rect x="0.5" y="0.5" width="12" height="12" fill="#f8fafc" stroke="#d4d4d4"/><path d="M4 2 H10.5 V8.5 L8.8 6.8 Q7 8.6 7.3 11.8 H5.6 Q3.6 9.5 4.5 7.2 Q5.2 5.6 6.2 4.2Z" fill="#3566a8"/></svg>
<div class="lbl" style="left:0px;top:995px">Skype</div>
<svg class="a" style="left:90px;top:943px" width="48" height="48" viewBox="0 0 48 48"><path d="M24 14.5 L43.84 14.5 A22 22 0 0 0 5.85 11.57 L15.77 28.75Z" fill="#db4437"/><path d="M24 14.5 L43.84 14.5 A22 22 0 0 1 22.31 45.93 L32.23 28.75Z" fill="#f4c20d"/><path d="M32.23 28.75 L22.31 45.93 A22 22 0 0 1 5.85 11.57 L15.77 28.75Z" fill="#0f9d58"/><circle cx="24" cy="24" r="9.6" fill="#fff"/><circle cx="24" cy="24" r="7.8" fill="#4285f4"/></svg>
<svg class="a" style="left:90px;top:978px" width="13" height="13" viewBox="0 0 13 13"><rect x="0.5" y="0.5" width="12" height="12" fill="#f8fafc" stroke="#d4d4d4"/><path d="M4 2 H10.5 V8.5 L8.8 6.8 Q7 8.6 7.3 11.8 H5.6 Q3.6 9.5 4.5 7.2 Q5.2 5.6 6.2 4.2Z" fill="#3566a8"/></svg>
<div class="lbl" style="left:76px;top:995px">Google</div>
<div class="lbl" style="left:76px;top:1010px">Chrome</div>
<div class="a" style="left:610px;top:104px;width:1184px;height:895px;background:#fff;border:1px solid #111c1c;box-shadow:0 0 7px rgba(0,0,0,.22)"></div>
<svg class="a" style="left:620px;top:112px;" width="16" height="17" viewBox="0 0 16 17"><g fill="#5c0a5c"><path d="M1 0 H6 V2 H2 V3 H5.5 V4 H6 V7 H5 V8 H0 V6 H4 V5 H1 V4 H0 V1 H1Z"/><path d="M7 0 H11 V1 H12 V2 H13 V6 H12 V7 H11 V8 H7Z M9 2 V6 H10.5 V2Z"/></g><path d="M5 8.5 L10 15.5 M10 8.5 L5 15.5" stroke="#5c0a5c" stroke-width="2.2"/><path d="M1 14.5 L5 11" stroke="#b0a888" stroke-width="1.8"/><g stroke="#f0a030" stroke-width="1"><path d="M13 9.5V15.5M10 12.5H16M11 10.5L15 14.5M15 10.5L11 14.5"/></g></svg>
<div class="a" style="left:643px;top:114px;width:1px;height:12px;background:#8c8c8c;"></div>
<svg class="a" style="left:655px;top:113px;" width="13" height="16" viewBox="0 0 13 16"><path d="M0.5 0.5 H9 L12.5 4 V15.5 H0.5Z" fill="#fdfdfd" stroke="#8a8a8a"/><path d="M3 8 L5.5 10.5 L10 6" stroke="#e0662a" stroke-width="1.5" fill="none"/></svg>
<svg class="a" style="left:677px;top:113px;" width="13" height="16" viewBox="0 0 13 16"><path d="M0.5 0.5 H9.5 V3 H11.5 V15.5 H0.5Z" fill="#fbe28e" stroke="#e8c55a"/><path d="M9.5 9 V15.5" stroke="#e8c55a"/></svg>
<svg class="a" style="left:697px;top:117px;" width="9" height="8" viewBox="0 0 9 8"><rect x="0" y="0" width="9" height="1.2" fill="#000"/><path d="M1 3 H8 L4.5 7Z" fill="#000"/></svg>
<div class="a" style="left:713px;top:114px;width:1px;height:12px;background:#8c8c8c;"></div>
<div class="a" style="left:841px;top:109px;width:71px;height:27px;background:#c4eea1;"></div>
<div class="t" style="left:841px;top:116px;line-height:16px;font-size:12px;color:#1c2e1c;width:71px;text-align:center;letter-spacing:-0.45px">Drive Tools</div>
<div class="t" style="left:926px;top:113px;line-height:16px;font-size:12px;color:#000;">E:\</div>
<div class="a" style="left:1673px;top:120px;width:11px;height:1px;background:#000;"></div>
<svg class="a" style="left:1717px;top:114px;" width="12" height="12" viewBox="0 0 12 12"><rect x="0.5" y="0.5" width="10" height="10" fill="none" stroke="#000"/></svg>
<svg class="a" style="left:1763px;top:114px;" width="12" height="12" viewBox="0 0 12 12"><path d="M0.5 0.5 L10.5 10.5 M10.5 0.5 L0.5 10.5" stroke="#000" stroke-width="1.1"/></svg>
<div class="a" style="left:612px;top:136px;width:56px;height:23px;background:#1979ca;"></div>
<div class="t" style="left:630px;top:140px;line-height:16px;font-size:12px;color:#fff;">File</div>
<div class="t" style="left:682px;top:140px;line-height:16px;font-size:12px;color:#333;">Home</div>
<div class="t" style="left:741px;top:140px;line-height:16px;font-size:12px;color:#333;">Share</div>
<div class="t" style="left:799px;top:140px;line-height:16px;font-size:12px;color:#333;">View</div>
<div class="a" style="left:841px;top:136px;width:1px;height:18px;background:#dadbdc;"></div>
<div class="a" style="left:911px;top:136px;width:1px;height:18px;background:#dadbdc;"></div>
<div class="t" style="left:855px;top:140px;line-height:16px;font-size:12px;color:#333;">Manage</div>
<div class="a" style="left:612px;top:159px;width:1180px;height:1px;background:#dadbdc;"></div>
<svg class="a" style="left:1754px;top:144px;" width="10" height="7" viewBox="0 0 10 7"><path d="M1 1 L5 5 L9 1" stroke="#b0b0b0" stroke-width="1.1" fill="none"/></svg>
<svg class="a" style="left:1774px;top:140px;" width="15" height="15" viewBox="0 0 15 15"><circle cx="7.5" cy="7.5" r="7" fill="#1a6fd0"/><text x="7.5" y="12.2" text-anchor="middle" font-family="Liberation Sans" font-weight="bold" font-size="12" fill="#fff">?</text></svg>
<svg class="a" style="left:624px;top:170px;" width="15" height="13" viewBox="0 0 15 13"><path d="M14 6.5 H2 M6.5 2 L2 6.5 L6.5 11" stroke="#c4c4c4" stroke-width="1.8" fill="none"/></svg>
<svg class="a" style="left:653px;top:170px;" width="15" height="13" viewBox="0 0 15 13"><path d="M1 6.5 H13 M8.5 2 L13 6.5 L8.5 11" stroke="#c4c4c4" stroke-width="1.8" fill="none"/></svg>
<svg class="a" style="left:680px;top:173px;" width="8" height="6" viewBox="0 0 8 6"><path d="M1 1 L4 4 L7 1" stroke="#c8c8c8" stroke-width="1.2" fill="none"/></svg>
<svg class="a" style="left:698px;top:170px;" width="14" height="14" viewBox="0 0 14 14"><path d="M7 13.5 V2 M1.5 7 L7 1.5 L12.5 7" stroke="#777" stroke-width="1.8" fill="none"/></svg>
<div class="a" style="left:718px;top:166px;width:848px;height:22px;border:1px solid #d9d9d9;background:#fff"></div>
<div class="a" style="left:1545px;top:167px;width:1px;height:20px;background:#d9d9d9;"></div>
<svg class="a" style="left:722px;top:169px;" width="16" height="17" viewBox="0 0 16 17"><g fill="#5c0a5c"><path d="M1 0 H6 V2 H2 V3 H5.5 V4 H6 V7 H5 V8 H0 V6 H4 V5 H1 V4 H0 V1 H1Z"/><path d="M7 0 H11 V1 H12 V2 H13 V6 H12 V7 H11 V8 H7Z M9 2 V6 H10.5 V2Z"/></g><path d="M5 8.5 L10 15.5 M10 8.5 L5 15.5" stroke="#5c0a5c" stroke-width="2.2"/><path d="M1 14.5 L5 11" stroke="#b0a888" stroke-width="1.8"/><g stroke="#f0a030" stroke-width="1"><path d="M13 9.5V15.5M10 12.5H16M11 10.5L15 14.5M15 10.5L11 14.5"/></g></svg>
<svg class="a" style="left:743px;top:172px;" width="6" height="9" viewBox="0 0 6 9"><path d="M1 1 L4.5 4.5 L1 8" stroke="#777" stroke-width="1.3" fill="none"/></svg>
<div class="t" style="left:758px;top:169px;line-height:16px;font-size:12px;color:#000;letter-spacing:-0.7px">SDXC (E:)</div>
<svg class="a" style="left:1531px;top:174px;" width="10" height="7" viewBox="0 0 10 7"><path d="M1 1.2 L5 5.2 L9 1.2" stroke="#555" stroke-width="1.5" fill="none"/></svg>
<svg class="a" style="left:1549px;top:169px;" width="15" height="16" viewBox="0 0 15 16"><path d="M11.5 6.5 A4.5 4.5 0 1 1 7.5 3" stroke="#666" stroke-width="1.5" fill="none"/><path d="M5.5 0.5 L9 3 L5.5 5.5Z" fill="#666"/></svg>
<div class="a" style="left:1578px;top:166px;width:202px;height:22px;border:1px solid #d9d9d9;background:#fff"></div>
<div class="t" style="left:1587px;top:169px;line-height:16px;font-size:12px;color:#6d6d6d;letter-spacing:-0.65px">Search SDXC (E:)</div>
<svg class="a" style="left:1759px;top:170px;" width="12" height="12" viewBox="0 0 12 12"><circle cx="7.5" cy="4.5" r="3.6" stroke="#555" stroke-width="1.3" fill="none"/><path d="M5 7 L1 11" stroke="#555" stroke-width="1.6"/></svg>
<div class="a" style="left:770px;top:197px;width:1px;height:800px;background:#f0f0f0;"></div>
<svg class="a" style="left:619px;top:210px;" width="10" height="8" viewBox="0 0 10 8"><path d="M1 1.5 L5 5.5 L9 1.5" stroke="#444" stroke-width="1.3" fill="none"/></svg>
<svg class="a" style="left:636px;top:206px;" width="17" height="16" viewBox="0 0 17 16"><path d="M10 1 L12 6.5 L16.5 6.8 L13 10 L14.5 15 L10 12 L5.8 15 L7.2 10 L3.5 6.8 L8 6.5Z" fill="#3d9ae6"/><path d="M1 8 H5 M0 11 H4 M2 14 H5" stroke="#3d9ae6" stroke-width="1"/></svg>
<div class="t" style="left:657px;top:207px;line-height:16px;font-size:12px;color:#000;">Quick access</div>
<div class="t" style="left:665px;top:231px;line-height:16px;font-size:12px;color:#000;">Desktop</div>
<svg class="a" style="left:644px;top:232px;" width="17" height="13" viewBox="0 0 17 13"><rect x="0" y="0" width="16" height="12" fill="#1b8ff0"/><rect x="0" y="10" width="16" height="2" fill="#0d63b8"/><path d="M2 11h1M12 11h1M14 11h1" stroke="#fff"/></svg>
<svg class="a" style="left:754px;top:232px;" width="11" height="11" viewBox="0 0 11 11"><path d="M5 1 L9 5 L7.5 5.8 L6 8.5 L1.5 4 L4.2 2.5Z M3 6.5 L0.5 9" stroke="#9a9a9a" stroke-width="1.2" fill="#9a9a9a"/></svg>
<div class="t" style="left:665px;top:255px;line-height:16px;font-size:12px;color:#000;">Documents</div>
<svg class="a" style="left:646px;top:254px;" width="13" height="16" viewBox="0 0 13 16"><path d="M0.5 0.5 H9 L12 3.5 V15.5 H0.5Z" fill="#fff" stroke="#8a8a8a"/><path d="M2.5 5H6M2.5 7.5H10M2.5 10H10M2.5 12.5H10" stroke="#3a8ad8"/></svg>
<svg class="a" style="left:754px;top:256px;" width="11" height="11" viewBox="0 0 11 11"><path d="M5 1 L9 5 L7.5 5.8 L6 8.5 L1.5 4 L4.2 2.5Z M3 6.5 L0.5 9" stroke="#9a9a9a" stroke-width="1.2" fill="#9a9a9a"/></svg>
<div class="t" style="left:665px;top:279px;line-height:16px;font-size:12px;color:#000;">Downloads</div>
<svg class="a" style="left:644px;top:279px;" width="17" height="16" viewBox="0 0 17 16"><path d="M5 0 H11 V7 H16 L8 15.5 L0 7 H5Z" fill="#3d8de0"/></svg>
<svg class="a" style="left:754px;top:280px;" width="11" height="11" viewBox="0 0 11 11"><path d="M5 1 L9 5 L7.5 5.8 L6 8.5 L1.5 4 L4.2 2.5Z M3 6.5 L0.5 9" stroke="#9a9a9a" stroke-width="1.2" fill="#9a9a9a"/></svg>
<div class="t" style="left:665px;top:303px;line-height:16px;font-size:12px;color:#000;">Pictures</div>
<svg class="a" style="left:644px;top:304px;" width="17" height="13" viewBox="0 0 17 13"><rect x="0.5" y="0.5" width="15" height="11" fill="#fff" stroke="#8a8a8a"/><rect x="2" y="2" width="12" height="8" fill="#3a5a6a"/><path d="M2 2 H14 V6 Q8 4 2 7Z" fill="#bcd8ec"/></svg>
<svg class="a" style="left:754px;top:304px;" width="11" height="11" viewBox="0 0 11 11"><path d="M5 1 L9 5 L7.5 5.8 L6 8.5 L1.5 4 L4.2 2.5Z M3 6.5 L0.5 9" stroke="#9a9a9a" stroke-width="1.2" fill="#9a9a9a"/></svg>
<div class="t" style="left:665px;top:327px;line-height:16px;font-size:12px;color:#000;">android_roms</div>
<svg class="a" style="left:646px;top:327px;" width="13" height="17" viewBox="0 0 13 17"><path d="M0.5 0.5 H9.5 V3 H11.5 V15.5 H0.5Z" fill="#fbe28e" stroke="#e8c55a"/><path d="M9.5 9 V15.5" stroke="#e8c55a"/></svg>
<div class="t" style="left:665px;top:351px;line-height:16px;font-size:12px;color:#000;letter-spacing:-0.25px">PodcastRetriever</div>
<svg class="a" style="left:646px;top:351px;" width="13" height="17" viewBox="0 0 13 17"><path d="M0.5 0.5 H9.5 V3 H11.5 V15.5 H0.5Z" fill="#fbe28e" stroke="#e8c55a"/><path d="M9.5 9 V15.5" stroke="#e8c55a"/></svg>
<div class="t" style="left:665px;top:375px;line-height:16px;font-size:12px;color:#000;letter-spacing:-0.37px">RemixOS_Android_f</div>
<svg class="a" style="left:646px;top:375px;" width="13" height="17" viewBox="0 0 13 17"><path d="M0.5 0.5 H9.5 V3 H11.5 V15.5 H0.5Z" fill="#fbe28e" stroke="#e8c55a"/><path d="M9.5 9 V15.5" stroke="#e8c55a"/></svg>
<div class="t" style="left:665px;top:399px;line-height:16px;font-size:12px;color:#000;">webpage</div>
<svg class="a" style="left:646px;top:399px;" width="13" height="17" viewBox="0 0 13 17"><path d="M0.5 0.5 H9.5 V3 H11.5 V15.5 H0.5Z" fill="#fbe28e" stroke="#e8c55a"/><path d="M9.5 9 V15.5" stroke="#e8c55a"/></svg>
<svg class="a" style="left:621px;top:433px;" width="7" height="10" viewBox="0 0 7 10"><path d="M1 1 L5 5 L1 9" stroke="#a0a0a0" stroke-width="1.3" fill="none"/></svg>
<svg class="a" style="left:636px;top:432px;" width="19" height="12" viewBox="0 0 19 12"><path d="M3 11 Q0 11 0.5 8 Q1 6 3.5 6 Q4 2 8 2 Q11 0 13.5 3 Q18 3 18 7.5 Q18.5 11 15 11Z" fill="#0f5fc0"/><path d="M3 11 Q4 7 8 7 Q10 4 13 5 Q16 6 16 9" stroke="#fff" stroke-width="1.2" fill="none"/></svg>
<div class="t" style="left:657px;top:431px;line-height:16px;font-size:12px;color:#000;">OneDrive</div>
<div class="a" style="left:612px;top:491px;width:156px;height:24px;background:#cce8ff;"></div>
<div class="t" style="left:657px;top:463px;line-height:16px;font-size:12px;color:#000;">This PC</div>
<div class="t" style="left:653px;top:495px;line-height:16px;font-size:12px;color:#000;">SDXC (E:)</div>
<div class="t" style="left:663px;top:519px;line-height:16px;font-size:12px;color:#000;width:106px;overflow:hidden">System Volume Information</div>
<div class="t" style="left:659px;top:551px;line-height:16px;font-size:12px;color:#000;">Network</div>
<div class="t" style="left:684px;top:575px;line-height:16px;font-size:12px;color:#000;letter-spacing:-0.3px">BETA-WIN</div>
<div class="t" style="left:660px;top:607px;line-height:16px;font-size:12px;color:#000;">Homegroup</div>
<div class="a" style="left:769px;top:197px;width:16px;height:800px;background:#fff;"></div>
<div class="a" style="left:770px;top:197px;width:1px;height:800px;background:#f0f0f0;"></div>
<svg class="a" style="left:908px;top:193px;" width="11" height="7" viewBox="0 0 11 7"><path d="M1 6 L5.5 1.5 L10 6" stroke="#8a8a8a" stroke-width="1.1" fill="none"/></svg>
<div class="t" style="left:789px;top:200px;line-height:16px;font-size:12px;color:#4c607a;">Name</div>
<div class="a" style="left:1043px;top:197px;width:1px;height:23px;background:#e5e5e5;"></div>
<div class="a" style="left:1163px;top:197px;width:1px;height:23px;background:#e5e5e5;"></div>
<div class="a" style="left:1283px;top:197px;width:1px;height:23px;background:#e5e5e5;"></div>
<div class="a" style="left:1363px;top:197px;width:1px;height:23px;background:#e5e5e5;"></div>
<div class="t" style="left:1050px;top:200px;line-height:16px;font-size:12px;color:#4c607a;">Date modified</div>
<div class="t" style="left:1170px;top:200px;line-height:16px;font-size:12px;color:#4c607a;">Type</div>
<div class="t" style="left:1290px;top:200px;line-height:16px;font-size:12px;color:#4c607a;">Size</div>
<svg class="a" style="left:790px;top:229px;" width="15" height="16" viewBox="0 0 15 16"><path d="M0.5 0.5 H11 V3 H13.5 V15.5 H0.5Z" fill="#fbe5a0" stroke="#ecd27a"/><path d="M11 9 V15.5" stroke="#ecd27a"/></svg>
<div class="t" style="left:810px;top:229px;line-height:16px;font-size:12px;color:#000;">System Volume Information</div>
<div class="t" style="left:1050px;top:229px;line-height:16px;font-size:12px;color:#6d6d6d;letter-spacing:-0.3px">1/31/2016 13:40</div>
<div class="t" style="left:1170px;top:229px;line-height:16px;font-size:12px;color:#6d6d6d;">File folder</div>
<div class="a" style="left:1744px;top:974px;width:22px;height:23px;background:#cce8ff;border:1px solid #99d1ff"></div>
<svg class="a" style="left:1747px;top:979px;" width="17" height="13" viewBox="0 0 17 13"><g fill="none" stroke="#8a8a8a"><rect x="0.5" y="0.5" width="3" height="3"/><rect x="0.5" y="4.5" width="3" height="3"/><rect x="0.5" y="8.5" width="3" height="3"/></g><g stroke="#666"><path d="M6 2H9M11 2H15M6 6H9M11 6H15M6 10H9M11 10H15"/></g></svg>
<svg class="a" style="left:1770px;top:979px;" width="15" height="12" viewBox="0 0 15 12"><rect x="0.5" y="0.5" width="13" height="10" fill="#fff" stroke="#a0a0a0"/><rect x="2" y="2" width="10" height="7" fill="#3a5a6a"/><path d="M2 2 H12 V5 Q7 3.5 2 6Z" fill="#bcd8ec"/></svg>
<div class="a" style="left:381px;top:446px;width:305px;height:594px;background:#f2f2f2;border:1px solid #8e8e8e;box-shadow:2px 2px 2px rgba(0,0,0,.28)"></div>
<div class="t" style="left:416px;top:454px;line-height:16px;color:#000;font-weight:bold;letter-spacing:-0.6px;">Collapse</div>
<div class="a" style="left:392px;top:476px;width:283px;height:1px;background:#919191"></div>
<div class="t" style="left:416px;top:483px;line-height:16px;color:#000;">Open AutoPlay...</div>
<div class="a" style="left:392px;top:505px;width:283px;height:1px;background:#919191"></div>
<div class="t" style="left:416px;top:512px;line-height:16px;color:#000;">Scan with COMODO Antivirus</div>
<svg class="a" style="left:392px;top:512px" width="16" height="16" viewBox="0 0 16 16"><rect x="0.5" y="0.5" width="15" height="15" rx="2.5" fill="#d8161a" stroke="#8a0a0a"/><path d="M11 5 Q9.5 3.5 8 3.5 Q4 3.5 4 8 Q4 12.5 8 12.5 Q9.5 12.5 11 11 L9.5 9.5 Q9 10.3 8 10.3 Q6.3 10.3 6.3 8 Q6.3 5.7 8 5.7 Q9 5.7 9.5 6.5Z" fill="#fff"/></svg>
<div class="a" style="left:392px;top:534px;width:283px;height:1px;background:#919191"></div>
<div class="t" style="left:416px;top:541px;line-height:16px;color:#000;">Scan with Windows Defender...</div>
<div class="t" style="left:416px;top:563px;line-height:16px;color:#000;">Open in new window</div>
<div class="t" style="left:416px;top:585px;line-height:16px;color:#000;">Pin to Quick access</div>
<div class="a" style="left:392px;top:607px;width:283px;height:1px;background:#919191"></div>
<div class="t" style="left:416px;top:614px;line-height:16px;color:#000;">Share with</div>
<svg class="a" style="left:666px;top:614px" width="10" height="15" viewBox="0 0 10 15"><path d="M1 0.6 L8 7.2 L1 13.8" stroke="#333" stroke-width="1.1" fill="none"/></svg>
<div class="t" style="left:416px;top:636px;line-height:16px;color:#000;">Open as Portable Device</div>
<div class="t" style="left:416px;top:658px;line-height:16px;color:#000;">7-Zip</div>
<svg class="a" style="left:666px;top:658px" width="10" height="15" viewBox="0 0 10 15"><path d="M1 0.6 L8 7.2 L1 13.8" stroke="#333" stroke-width="1.1" fill="none"/></svg>
<div class="t" style="left:416px;top:680px;line-height:16px;color:#000;">CRC SHA</div>
<svg class="a" style="left:666px;top:680px" width="10" height="15" viewBox="0 0 10 15"><path d="M1 0.6 L8 7.2 L1 13.8" stroke="#333" stroke-width="1.1" fill="none"/></svg>
<div class="t" style="left:416px;top:702px;line-height:16px;color:#000;">Include in library</div>
<svg class="a" style="left:666px;top:702px" width="10" height="15" viewBox="0 0 10 15"><path d="M1 0.6 L8 7.2 L1 13.8" stroke="#333" stroke-width="1.1" fill="none"/></svg>
<div class="t" style="left:416px;top:724px;line-height:16px;color:#000;">Pin to Start</div>
<div class="t" style="left:416px;top:746px;line-height:16px;color:#000;">Add to archive...</div>
<svg class="a" style="left:391px;top:746px" width="17" height="16" viewBox="0 0 17 16"><path d="M0.5 1.5 Q0.5 0.5 2 0.5 H15.5 V5.5 H2 Q0.5 5.5 0.5 4.5Z" fill="#fff" stroke="#1a1a1a"/><rect x="4" y="1" width="11" height="4" fill="#c42080"/><path d="M0.5 6.5 Q0.5 5.5 2 5.5 H15.5 V10.5 H2 Q0.5 10.5 0.5 9.5Z" fill="#fff" stroke="#1a1a1a"/><rect x="4" y="6" width="11" height="4" fill="#2a70c0"/><path d="M0.5 11.5 Q0.5 10.5 2 10.5 H15.5 V15.5 H2 Q0.5 15.5 0.5 14.5Z" fill="#fff" stroke="#1a1a1a"/><rect x="4" y="11" width="11" height="4" fill="#20a060"/><rect x="3" y="1" width="3" height="1.5" fill="#f0a030"/></svg>
<div class="t" style="left:416px;top:768px;line-height:16px;color:#000;">Add to "Archive.rar"</div>
<svg class="a" style="left:391px;top:768px" width="17" height="16" viewBox="0 0 17 16"><path d="M0.5 1.5 Q0.5 0.5 2 0.5 H15.5 V5.5 H2 Q0.5 5.5 0.5 4.5Z" fill="#fff" stroke="#1a1a1a"/><rect x="4" y="1" width="11" height="4" fill="#c42080"/><path d="M0.5 6.5 Q0.5 5.5 2 5.5 H15.5 V10.5 H2 Q0.5 10.5 0.5 9.5Z" fill="#fff" stroke="#1a1a1a"/><rect x="4" y="6" width="11" height="4" fill="#2a70c0"/><path d="M0.5 11.5 Q0.5 10.5 2 10.5 H15.5 V15.5 H2 Q0.5 15.5 0.5 14.5Z" fill="#fff" stroke="#1a1a1a"/><rect x="4" y="11" width="11" height="4" fill="#20a060"/><rect x="3" y="1" width="3" height="1.5" fill="#f0a030"/></svg>
<div class="t" style="left:416px;top:790px;line-height:16px;color:#000;">Compress and email...</div>
<svg class="a" style="left:391px;top:790px" width="17" height="16" viewBox="0 0 17 16"><path d="M0.5 1.5 Q0.5 0.5 2 0.5 H15.5 V5.5 H2 Q0.5 5.5 0.5 4.5Z" fill="#fff" stroke="#1a1a1a"/><rect x="4" y="1" width="11" height="4" fill="#c42080"/><path d="M0.5 6.5 Q0.5 5.5 2 5.5 H15.5 V10.5 H2 Q0.5 10.5 0.5 9.5Z" fill="#fff" stroke="#1a1a1a"/><rect x="4" y="6" width="11" height="4" fill="#2a70c0"/><path d="M0.5 11.5 Q0.5 10.5 2 10.5 H15.5 V15.5 H2 Q0.5 15.5 0.5 14.5Z" fill="#fff" stroke="#1a1a1a"/><rect x="4" y="11" width="11" height="4" fill="#20a060"/><rect x="3" y="1" width="3" height="1.5" fill="#f0a030"/></svg>
<div class="t" style="left:416px;top:812px;line-height:16px;color:#000;">Compress to "Archive.rar" and email</div>
<svg class="a" style="left:391px;top:812px" width="17" height="16" viewBox="0 0 17 16"><path d="M0.5 1.5 Q0.5 0.5 2 0.5 H15.5 V5.5 H2 Q0.5 5.5 0.5 4.5Z" fill="#fff" stroke="#1a1a1a"/><rect x="4" y="1" width="11" height="4" fill="#c42080"/><path d="M0.5 6.5 Q0.5 5.5 2 5.5 H15.5 V10.5 H2 Q0.5 10.5 0.5 9.5Z" fill="#fff" stroke="#1a1a1a"/><rect x="4" y="6" width="11" height="4" fill="#2a70c0"/><path d="M0.5 11.5 Q0.5 10.5 2 10.5 H15.5 V15.5 H2 Q0.5 15.5 0.5 14.5Z" fill="#fff" stroke="#1a1a1a"/><rect x="4" y="11" width="11" height="4" fill="#20a060"/><rect x="3" y="1" width="3" height="1.5" fill="#f0a030"/></svg>
<div class="a" style="left:384px;top:831px;width:299px;height:22px;background:#d8d8d8"></div>
<div class="t" style="left:416px;top:834px;line-height:16px;color:#000;">Format...</div>
<div class="t" style="left:416px;top:856px;line-height:16px;color:#000;">Eject</div>
<div class="a" style="left:392px;top:878px;width:283px;height:1px;background:#919191"></div>
<div class="t" style="left:416px;top:885px;line-height:16px;color:#000;">Cut</div>
<div class="t" style="left:416px;top:907px;line-height:16px;color:#000;">Copy</div>
<div class="t" style="left:416px;top:929px;line-height:16px;color:#000;">Paste</div>
<div class="a" style="left:392px;top:951px;width:283px;height:1px;background:#919191"></div>
<div class="t" style="left:416px;top:958px;line-height:16px;color:#000;">Rename</div>
<div class="a" style="left:392px;top:980px;width:283px;height:1px;background:#919191"></div>
<div class="t" style="left:416px;top:987px;line-height:16px;color:#000;">New</div>
<svg class="a" style="left:666px;top:987px" width="10" height="15" viewBox="0 0 10 15"><path d="M1 0.6 L8 7.2 L1 13.8" stroke="#333" stroke-width="1.1" fill="none"/></svg>
<div class="a" style="left:392px;top:1009px;width:283px;height:1px;background:#919191"></div>
<div class="t" style="left:416px;top:1016px;line-height:16px;color:#000;">Properties</div>
<svg class="a" style="left:466px;top:841px" width="21" height="26" viewBox="0 0 21 26"><path d="M6.2 2.5 Q6.2 0.8 8.1 0.8 Q10 0.8 10 2.5 V6.8 Q11.6 6 13 7.2 Q14.6 6.8 16 8.4 Q17.6 8 19 9.6 V18 Q19 21.5 16.3 24.6 H9.2 Q7.2 23 2 16.2 Q0.8 14.2 2.6 13.4 Q4.4 12.8 6.2 15.6Z" fill="#fff" stroke="#000" stroke-width="1.15"/><path d="M10 6.8 V12.8 M13 7.2 V12.8 M16 8.4 V12.8" stroke="#000" stroke-width="1"/></svg>
<div class="a" style="left:0px;top:1040px;width:1920px;height:40px;background:#050707;"></div>
<div class="a" style="left:0px;top:1079px;width:1920px;height:1px;background:#001c02;"></div>
<svg class="a" style="left:15px;top:1051px;" width="18" height="18" viewBox="0 0 18 18"><path d="M1 3 L7.3 2.1 V8.6 H1Z M8.3 2 L17 0.8 V8.6 H8.3Z M1 9.6 H7.3 V16 L1 15.1Z M8.3 9.6 H17 V17.2 L8.3 16Z" fill="#fff"/></svg>
<div class="a" style="left:48px;top:1040px;width:344px;height:39px;background:#363636;"></div>
<div class="a" style="left:48px;top:1079px;width:344px;height:1px;background:#134210;"></div>
<div class="t" style="left:60px;top:1053px;line-height:16px;font-size:15px;color:#c4c4c4;">Search the web and Windows</div>
<svg class="a" style="left:405px;top:1052px;" width="22" height="16" viewBox="0 0 22 16"><rect x="5.5" y="1.5" width="11" height="13" fill="none" stroke="#fff" stroke-width="1.3"/><path d="M3 3.5 H1 V12.5 H3 M19 3.5 H21 V12.5 H19" stroke="#fff" stroke-width="1.2" fill="none"/></svg>
<div class="a" style="left:445px;top:1052px;width:1px;height:17px;background:#555;"></div>
<div class="a" style="left:448px;top:1052px;width:1px;height:17px;background:#444;"></div>
<div class="a" style="left:466px;top:1078px;width:152px;height:2px;background:#9ee6d6;"></div>
<svg class="a" style="left:474px;top:1049px;" width="21" height="21" viewBox="0 0 21 21"><path d="M20 12 H6.5 Q7 17 12 17 Q15.5 17 19 15 V19 Q15.5 21 11.5 21 Q1.5 21 1.5 11.5 Q1.5 5 7 2 Q4.5 5.5 5 8 Q7 4.5 12 4.5 Q20 4.5 20 12Z M6.5 9.5 H14.5 Q14.5 7 11 7 Q7.5 7 6.5 9.5Z" fill="#1e7ad6"/></svg>
<div class="t" style="left:500px;top:1052px;line-height:16px;font-size:12px;color:#fff;">Google - Microsoft ...</div>
<div class="a" style="left:627px;top:1078px;width:152px;height:2px;background:#9ce8c0;"></div>
<svg class="a" style="left:636px;top:1050px;" width="22" height="22" viewBox="0 0 22 22"><path d="M2 3 L8 1 H11 V18 L2 20Z" fill="#e8c050"/><path d="M2 3 L8 1 V18 L2 20Z" fill="#f4d470"/><path d="M12 9 H17 V14 H20 L14.5 20 L9 14 H12Z" fill="#2a8ae0"/></svg>
<div class="t" style="left:661px;top:1052px;line-height:16px;font-size:12px;color:#fff;">Downloads</div>
<div class="a" style="left:783px;top:1040px;width:160px;height:38px;background:#3a3a3a;"></div>
<div class="a" style="left:783px;top:1078px;width:160px;height:2px;background:#a8daf0;"></div>
<svg class="a" style="left:792px;top:1046px;" width="26" height="26" viewBox="0 0 26 26"><text x="3" y="13" font-family="Liberation Sans" font-size="11" fill="#7a1a8a">SD</text><ellipse cx="9" cy="19" rx="7" ry="3.5" fill="#d8d8e8"/><text x="9" y="24" font-family="Liberation Sans" font-weight="bold" font-size="10" fill="#7a1a8a">XC</text></svg>
<div class="t" style="left:821px;top:1052px;line-height:16px;font-size:12px;color:#fff;">E:\</div>
<svg class="a" style="left:957px;top:1050px;" width="21" height="20" viewBox="0 0 21 20"><rect x="0" y="2" width="20" height="15" fill="#3aa0e8"/><rect x="1" y="3" width="18" height="13" fill="#bfe4fa"/><circle cx="6" cy="8" r="3.3" fill="#3a90d8"/><path d="M6 4.7 A3.3 3.3 0 0 1 9.3 8 H6Z" fill="#f0b020"/><g fill="#3a90d8"><rect x="12" y="5" width="6" height="2"/><rect x="12" y="8" width="6" height="2"/><rect x="12" y="11" width="6" height="2"/></g><rect x="3" y="14" width="14" height="1" fill="#3a90d8"/></svg>
<svg class="a" style="left:1005px;top:1050px;" width="23" height="19" viewBox="0 0 23 19"><rect x="0.5" y="0.5" width="21" height="18" fill="#000" stroke="#c8c8c8"/><rect x="1" y="1" width="20" height="1" fill="#ddd"/><path d="M1 2 H21 V6 Q11 9 1 13Z" fill="#333"/><text x="2.5" y="9" font-family="Liberation Mono" font-weight="bold" font-size="7" fill="#eee">C:\</text><rect x="13" y="8" width="6" height="1.2" fill="#eee"/></svg>
<svg class="a" style="left:1055px;top:1048px;" width="22" height="22" viewBox="0 0 22 22"><g transform="scale(0.4583)"><path d="M24 14.5 L43.84 14.5 A22 22 0 0 0 5.85 11.57 L15.77 28.75Z" fill="#db4437"/><path d="M24 14.5 L43.84 14.5 A22 22 0 0 1 22.31 45.93 L32.23 28.75Z" fill="#f4c20d"/><path d="M32.23 28.75 L22.31 45.93 A22 22 0 0 1 5.85 11.57 L15.77 28.75Z" fill="#0f9d58"/><circle cx="24" cy="24" r="9.6" fill="#fff"/><circle cx="24" cy="24" r="7.8" fill="#4285f4"/></g></svg>
<svg class="a" style="left:1103px;top:1047px;" width="24" height="24" viewBox="0 0 24 24"><defs><linearGradient id="ieg" x1="0" y1="0" x2="0" y2="1"><stop offset="0" stop-color="#7ad8f8"/><stop offset="1" stop-color="#1a8ad8"/></linearGradient></defs><ellipse cx="12" cy="12.5" rx="12" ry="5" transform="rotate(-40 12 12.5)" fill="none" stroke="#f0c428" stroke-width="1.6"/><path d="M4.5 13.5 A8.5 8.5 0 0 1 21.5 13.5 V15 H9.5 Q10 18.5 14 18.5 Q17 18.5 18.5 16.8 H21.3 Q19.5 22 13 22 A8.5 8.5 0 0 1 4.5 13.5Z M9.5 11.5 H17.5 Q17 8 13.5 8 Q10 8 9.5 11.5Z" fill="url(#ieg)"/><path d="M2.5 21.5 Q1 18.5 5.5 14" stroke="#f0c428" stroke-width="1.6" fill="none"/></svg>
<div class="a" style="left:1501px;top:1052px;width:1px;height:18px;background:#555;"></div>
<div class="a" style="left:1504px;top:1052px;width:1px;height:18px;background:#444;"></div>
<div class="t" style="left:1514px;top:1052px;line-height:16px;font-size:12px;color:#d0d0d0;">Desktop</div>
<svg class="a" style="left:1565px;top:1046px;" width="14" height="20" viewBox="0 0 14 20"><circle cx="7" cy="5" r="4" fill="#c89070"/><path d="M3 5 Q3 1 7 1 Q11 1 11 5 Q9 3 7 3.5 Q5 3 3 5Z" fill="#4a3020"/><path d="M0 19 Q0 11 7 10 Q14 11 14 19Z" fill="#3aa070"/></svg>
<div class="t" style="left:1584px;top:1047px;line-height:16px;font-size:13px;color:#fff;">lutusp</div>
<svg class="a" style="left:1634px;top:1048px;" width="10" height="8" viewBox="0 0 10 8"><path d="M1 1 L4 4 L1 7 M5 1 L8 4 L5 7" stroke="#fff" stroke-width="1.3" fill="none"/></svg>
<svg class="a" style="left:1656px;top:1056px;" width="16" height="9" viewBox="0 0 16 9"><path d="M1 8 L8 1 L15 8" stroke="#fff" stroke-width="1.3" fill="none"/></svg>
<svg class="a" style="left:1686px;top:1051px;" width="20" height="18" viewBox="0 0 20 18"><path d="M2 4 V8 M5 4 V8 M1 8 H6 V10 Q6 12 3.5 12 V16" stroke="#fff" stroke-width="1.1" fill="none"/><rect x="6.5" y="7.5" width="11" height="7" fill="#fff" stroke="#fff"/><rect x="8" y="9" width="2" height="4" fill="#000"/><rect x="18" y="9.5" width="1.5" height="3" fill="#fff"/></svg>
<svg class="a" style="left:1720px;top:1051px;" width="17" height="17" viewBox="0 0 17 17"><rect x="3.5" y="2.5" width="12" height="9" fill="none" stroke="#fff"/><path d="M9.5 11.5 V14.5 M6 14.5 H13 M3.5 6 H1.5 V15" stroke="#fff" fill="none"/><rect x="1" y="2" width="4" height="4" fill="#fff"/></svg>
<svg class="a" style="left:1750px;top:1051px;" width="18" height="17" viewBox="0 0 18 17"><path d="M1.5 6 H4.5 L9 2 V15 L4.5 11 H1.5Z" fill="none" stroke="#fff" stroke-width="1.1"/><path d="M11 5.5 Q12.5 8.5 11 11.5 M13 3.5 Q16 8.5 13 13.5 M15 2 Q18.5 8.5 15 15" stroke="#fff" stroke-width="1" fill="none"/></svg>
<svg class="a" style="left:1783px;top:1051px;" width="18" height="18" viewBox="0 0 18 18"><path d="M0.5 0.5 H16.5 V13 H10 L8.5 15 L7 13 H0.5Z" fill="#fff"/><path d="M3 4 H14 M3 6.5 H14 M3 9 H10" stroke="#000" stroke-width="1"/></svg>
<svg class="a" style="left:1816px;top:1052px;" width="25" height="15" viewBox="0 0 25 15"><rect x="0.5" y="0.5" width="23" height="13" fill="none" stroke="#fff" stroke-width="1.1"/><path d="M3 4h1M6 4h1M9 4h1M12 4h1M15 4h1M18 4h1M21 4h0.5M3 7h1M6 7h1M9 7h1M12 7h1M15 7h1M18 7h1M21 7h0.5M6 10H18" stroke="#fff"/></svg>
<div class="t" style="left:1861px;top:1044px;line-height:16px;font-size:12px;color:#fff;width:42px;text-align:center">14:54</div>
<div class="t" style="left:1853px;top:1061px;line-height:16px;font-size:12px;color:#fff;width:57px;text-align:center">1/31/2016</div>
<div class="a" style="left:1915px;top:1040px;width:1px;height:40px;background:#444;"></div>
</body></html>
